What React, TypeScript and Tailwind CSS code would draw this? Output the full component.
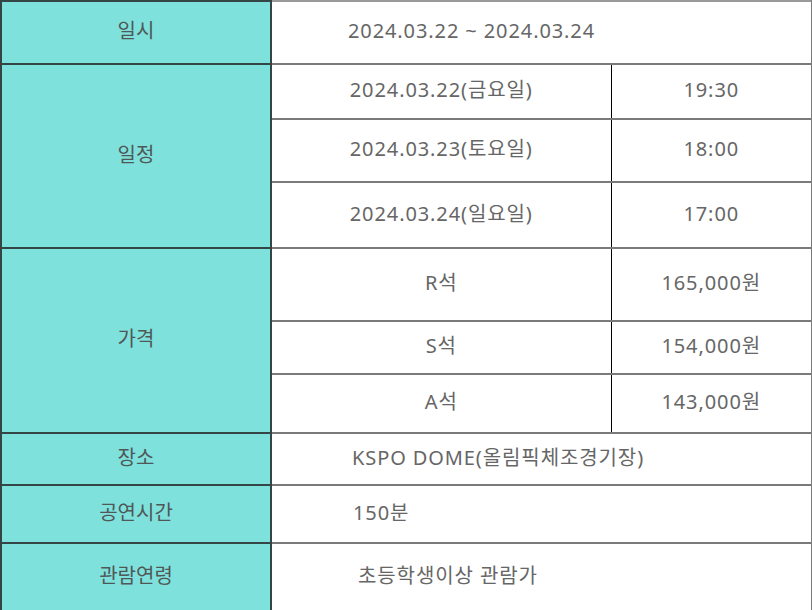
const label =
  'bg-[#7fe1dc] border-2 border-[#354545] text-center align-middle text-[#4f5757] pb-[3px]';
const cell = 'border-2 border-[#7a7a7a] align-middle text-[#666] tracking-[0.9px] pb-[3px]';
const leftCell = 'border-r border-r-black';
const rightCell = 'border-l border-l-black';

const schedule = [
  { date: '2024.03.22(금요일)', time: '19:30', h: 'h-[55px]' },
  { date: '2024.03.23(토요일)', time: '18:00', h: 'h-[63px]' },
  { date: '2024.03.24(일요일)', time: '17:00', h: 'h-[66px]' },
];

const prices = [
  { seat: 'R석', price: '165,000원', h: 'h-[73px]' },
  { seat: 'S석', price: '154,000원', h: 'h-[53px]' },
  { seat: 'A석', price: '143,000원', h: 'h-[59px]' },
];

export default function App() {
  return (
    <div
      className="w-[812px] h-[610px] overflow-hidden bg-white text-[20px]"
      style={{ fontFamily: '"Noto Sans", "Noto Sans CJK KR", sans-serif' }}
    >
      <table className="w-[811px] border-collapse table-fixed">
        <colgroup>
          <col className="w-[270px]" />
          <col className="w-[340px]" />
          <col className="w-[201px]" />
        </colgroup>
        <tbody>
          {/* 일시 */}
          <tr className="h-[63px]">
            <td className={label}>일시</td>
            <td colSpan={2} className={`${cell} border-t-[#999] pl-[76px]`}>
              2024.03.22 ~ 2024.03.24
            </td>
          </tr>

          {/* 일정 */}
          {schedule.map((s, i) => (
            <tr key={s.date} className={s.h}>
              {i === 0 && (
                <td rowSpan={3} className={label}>
                  일정
                </td>
              )}
              <td className={`${cell} ${leftCell} text-center`}>{s.date}</td>
              <td className={`${cell} ${rightCell} text-center`}>{s.time}</td>
            </tr>
          ))}

          {/* 가격 */}
          {prices.map((p, i) => (
            <tr key={p.seat} className={p.h}>
              {i === 0 && (
                <td rowSpan={3} className={label}>
                  가격
                </td>
              )}
              <td className={`${cell} ${leftCell} text-center`}>{p.seat}</td>
              <td className={`${cell} ${rightCell} text-center`}>{p.price}</td>
            </tr>
          ))}

          <tr className="h-[52px]">
            <td className={label}>장소</td>
            <td colSpan={2} className={`${cell} pl-[80px]`}>
              KSPO DOME(올림픽체조경기장)
            </td>
          </tr>
          <tr className="h-[58px]">
            <td className={label}>공연시간</td>
            <td colSpan={2} className={`${cell} pl-[81px]`}>
              150분
            </td>
          </tr>
          <tr className="h-[68px]">
            <td className={label}>관람연령</td>
            <td colSpan={2} className={`${cell} border-b-[#ccc] pl-[86px]`}>
              초등학생이상 관람가
            </td>
          </tr>
        </tbody>
      </table>
    </div>
  );
}
